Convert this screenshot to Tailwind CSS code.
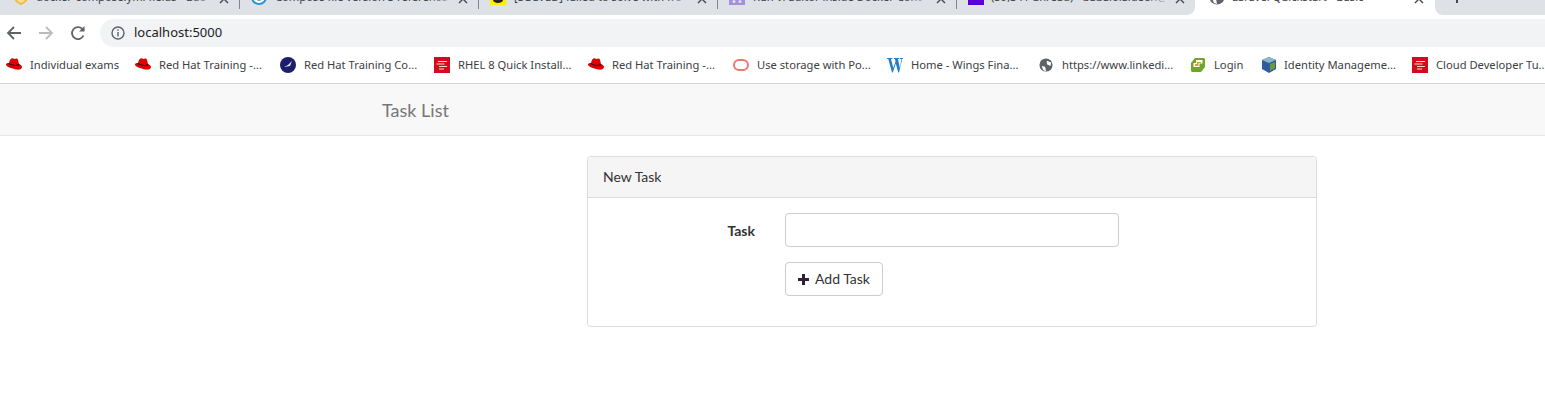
<!DOCTYPE html>
<html lang="en">
<head>
  <meta charset="UTF-8">
  <title>Laravel Quickstart - Basic</title>
  <script src="https://cdn.jsdelivr.net/npm/@tailwindcss/browser@4"></script>
</head>
<body class="bg-white h-[415px] overflow-hidden font-['Lato',sans-serif] text-[14px] text-[#333]">

  <!-- tab strip, cut off at the top of the screenshot -->
  <div class="flex h-[15px] overflow-hidden bg-white font-['Noto_Sans',sans-serif] text-[11.2px] text-[#3c4043]">
    <div class="flex w-[1195px] h-[15px] bg-[#dee1e6] rounded-br-[8px] overflow-hidden">
      <div class="relative flex items-center shrink-0 w-[239px] h-[30px] -mt-[18px] pl-[13px]">
        <svg class="w-[16px] h-[16px] shrink-0" viewBox="0 0 16 16"><path d="M1 5 8 0l7 5v3c0 4-3 6-7 8-4-2-7-4-7-8z" fill="#f6b73c"/><path d="M4 7h8v3c0 2-2 3-4 4-2-1-4-2-4-4z" fill="#fde293"/></svg>
        <span class="ml-[7px] whitespace-nowrap">docker-compose.yml fields - Bae</span>
        <span class="absolute right-[22px] top-0 w-[28px] h-full bg-linear-to-r from-[#dee1e6]/0 to-[#dee1e6]"></span>
        <svg class="absolute right-[10px] top-[12px] w-[10px] h-[10px]" viewBox="0 0 10 10"><path d="M1 1l8 8M9 1 1 9" stroke="#45484d" stroke-width="1.4"/></svg>
      </div>
      <div class="relative flex items-center shrink-0 w-[239px] h-[30px] -mt-[18px] pl-[12px]">
        <span class="absolute left-0 top-[18px] h-[9px] w-px bg-[#80868b]"></span>
        <svg class="w-[16px] h-[16px] shrink-0" viewBox="0 0 16 16"><circle cx="8" cy="8" r="7" fill="#fff" stroke="#2496d8" stroke-width="2"/><circle cx="8" cy="8" r="3.5" fill="#1c3f6e"/></svg>
        <span class="ml-[8px] whitespace-nowrap">Compose file version 3 reference</span>
        <span class="absolute right-[22px] top-0 w-[28px] h-full bg-linear-to-r from-[#dee1e6]/0 to-[#dee1e6]"></span>
        <svg class="absolute right-[10px] top-[12px] w-[10px] h-[10px]" viewBox="0 0 10 10"><path d="M1 1l8 8M9 1 1 9" stroke="#45484d" stroke-width="1.4"/></svg>
      </div>
      <div class="relative flex items-center shrink-0 w-[239px] h-[30px] -mt-[18px] pl-[12px]">
        <span class="absolute left-0 top-[18px] h-[9px] w-px bg-[#80868b]"></span>
        <svg class="w-[16px] h-[16px] shrink-0" viewBox="0 0 16 16"><rect width="16" height="16" fill="#ffee00"/><ellipse cx="8" cy="11" rx="5" ry="3" fill="#222"/></svg>
        <span class="ml-[8px] whitespace-nowrap">[SOLVED] failed to solve with fro</span>
        <span class="absolute right-[22px] top-0 w-[28px] h-full bg-linear-to-r from-[#dee1e6]/0 to-[#dee1e6]"></span>
        <svg class="absolute right-[10px] top-[12px] w-[10px] h-[10px]" viewBox="0 0 10 10"><path d="M1 1l8 8M9 1 1 9" stroke="#45484d" stroke-width="1.4"/></svg>
      </div>
      <div class="relative flex items-center shrink-0 w-[239px] h-[30px] -mt-[18px] pl-[12px]">
        <span class="absolute left-0 top-[18px] h-[9px] w-px bg-[#80868b]"></span>
        <svg class="w-[16px] h-[16px] shrink-0" viewBox="0 0 16 16"><rect width="16" height="16" fill="#a48fdc"/><circle cx="5" cy="12.500" r="1.500" fill="#e4dcf6"/><circle cx="11" cy="12.500" r="1.500" fill="#e4dcf6"/></svg>
        <span class="ml-[8px] whitespace-nowrap">Run vi Editor inside Docker Cont</span>
        <span class="absolute right-[22px] top-0 w-[28px] h-full bg-linear-to-r from-[#dee1e6]/0 to-[#dee1e6]"></span>
        <svg class="absolute right-[10px] top-[12px] w-[10px] h-[10px]" viewBox="0 0 10 10"><path d="M1 1l8 8M9 1 1 9" stroke="#45484d" stroke-width="1.4"/></svg>
      </div>
      <div class="relative flex items-center shrink-0 w-[239px] h-[30px] -mt-[18px] pl-[12px]">
        <span class="absolute left-0 top-[18px] h-[9px] w-px bg-[#80868b]"></span>
        <svg class="w-[16px] h-[16px] shrink-0" viewBox="0 0 16 16"><rect width="16" height="16" fill="#5a00d0"/></svg>
        <span class="ml-[7px] whitespace-nowrap">(59,341 unread) - babaiolaideen@</span>
        <span class="absolute right-[22px] top-0 w-[28px] h-full bg-linear-to-r from-[#dee1e6]/0 to-[#dee1e6]"></span>
        <svg class="absolute right-[10px] top-[12px] w-[10px] h-[10px]" viewBox="0 0 10 10"><path d="M1 1l8 8M9 1 1 9" stroke="#45484d" stroke-width="1.4"/></svg>
      </div>
    </div>
    <div class="relative flex items-center shrink-0 w-[240px] h-[30px] -mt-[18px] pl-[14px]">
      <svg class="w-[16px] h-[16px] shrink-0" viewBox="0 0 16 16"><circle cx="8" cy="8" r="7.5" fill="#5f6368"/><path d="M3 9l4 1 1 5-3-1zM9 3l5 2-1 4-4-2z" fill="#fff"/></svg>
      <span class="ml-[7px] whitespace-nowrap">Laravel Quickstart - Basic</span>
      <svg class="absolute right-[11px] top-[12px] w-[10px] h-[10px]" viewBox="0 0 10 10"><path d="M1 1l8 8M9 1 1 9" stroke="#45484d" stroke-width="1.4"/></svg>
    </div>
    <div class="flex-1 h-[15px] bg-[#dee1e6] rounded-bl-[8px] pl-[21px]">
      <span class="block w-[2px] h-[3px] bg-[#45484d]"></span>
    </div>
  </div>

  <!-- toolbar -->
  <div class="flex items-start h-[32px] pt-[4px] bg-white">
    <div class="flex items-center h-[28px] w-[100px] pl-[6px] gap-[16px]">
      <svg class="w-[16px] h-[16px]" viewBox="0 0 16 16" fill="none" stroke="#5f6368" stroke-width="1.8"><path d="M15 8H2M8 2 2 8l6 6"/></svg>
      <svg class="w-[16px] h-[16px]" viewBox="0 0 16 16" fill="none" stroke="#babcbe" stroke-width="1.8"><path d="M1 8h13M8 2l6 6-6 6"/></svg>
      <svg class="w-[16px] h-[16px]" viewBox="0 0 16 16" fill="none" stroke="#5f6368" stroke-width="1.8"><path d="M13.5 10.5A6 6 0 1 1 12.2 3.8L14 5.5"/><path d="M14.5 1v5.5H9" fill="#5f6368" stroke="none"/></svg>
    </div>
    <div class="flex-1 flex items-center h-[28px] pl-[11px] bg-[#f1f3f4] rounded-l-[14px] font-['Noto_Sans',sans-serif] text-[13px] text-[#202124]">
      <svg class="w-[14px] h-[14px] shrink-0" viewBox="0 0 14 14" fill="none" stroke="#5f6368" stroke-width="1.4"><circle cx="7" cy="7" r="6"/><path d="M7 6v4.5M7 3.2v1.6"/></svg>
      <span class="ml-[9px]">localhost:5000</span>
    </div>
  </div>

  <!-- bookmarks bar -->
  <div class="flex items-center h-[36px] pl-[6px] bg-white border-b border-[#d4d4d4] font-['Noto_Sans',sans-serif] text-[11.2px] text-[#3c4043] whitespace-nowrap box-content">
    <div class="flex items-center gap-[8px] w-[129px] shrink-0">
      <svg class="w-[16px] h-[16px]" viewBox="0 0 16 16"><path d="M5.500 1.500c1-.5 2 .5 3 .5s2-1 3 0c.7.8 1 3 1.500 5 1.500.7 3 1.700 3 3 0 2-2.500 3-5.500 2.500C7 12 0 10 0 7.500c0-1 1-1.500 3-1.500.5-2 1-4 2.500-4.500z" fill="#e00000"/><path d="M3 6c2.500 1.800 6.500 2.800 10 1l.4 1.200c-3.500 1.500-8 .3-10.900-1.200z" fill="#111"/></svg>
      <span>Individual exams</span>
    </div>
    <div class="flex items-center gap-[8px] w-[145px] shrink-0">
      <svg class="w-[16px] h-[16px]" viewBox="0 0 16 16"><path d="M5.500 1.500c1-.5 2 .5 3 .5s2-1 3 0c.7.8 1 3 1.500 5 1.500.7 3 1.700 3 3 0 2-2.500 3-5.500 2.500C7 12 0 10 0 7.500c0-1 1-1.500 3-1.500.5-2 1-4 2.500-4.500z" fill="#e00000"/><path d="M3 6c2.500 1.800 6.500 2.800 10 1l.4 1.200c-3.500 1.500-8 .3-10.900-1.200z" fill="#111"/></svg>
      <span>Red Hat Training -...</span>
    </div>
    <div class="flex items-center gap-[8px] w-[154px] shrink-0">
      <svg class="w-[16px] h-[16px]" viewBox="0 0 16 16"><circle cx="8" cy="8" r="8" fill="#1b1f6b"/><path d="M4 10l4-2 4-4-2 5z" fill="#dfe3f5"/><path d="M11 4l1 1-1 1z" fill="#e0483a"/></svg>
      <span>Red Hat Training Co...</span>
    </div>
    <div class="flex items-center gap-[8px] w-[154px] shrink-0">
      <svg class="w-[16px] h-[16px]" viewBox="0 0 16 16"><rect width="16" height="16" fill="#d40b1c"/><path d="M4 4.500h9M2.500 7h8M5 9.500h8M5 12h5" stroke="#fbd6d6" stroke-width="1.200"/></svg>
      <span>RHEL 8 Quick Install...</span>
    </div>
    <div class="flex items-center gap-[8px] w-[145px] shrink-0">
      <svg class="w-[16px] h-[16px]" viewBox="0 0 16 16"><path d="M5.500 1.500c1-.5 2 .5 3 .5s2-1 3 0c.7.8 1 3 1.500 5 1.500.7 3 1.700 3 3 0 2-2.500 3-5.500 2.500C7 12 0 10 0 7.500c0-1 1-1.500 3-1.500.5-2 1-4 2.500-4.500z" fill="#e00000"/><path d="M3 6c2.500 1.800 6.500 2.800 10 1l.4 1.200c-3.500 1.500-8 .3-10.900-1.200z" fill="#111"/></svg>
      <span>Red Hat Training -...</span>
    </div>
    <div class="flex items-center gap-[8px] w-[154px] shrink-0">
      <svg class="w-[16px] h-[16px]" viewBox="0 0 16 16"><rect x="1" y="3" width="14" height="10" rx="5" fill="none" stroke="#ea7a6a" stroke-width="2"/></svg>
      <span>Use storage with Po...</span>
    </div>
    <div class="flex items-center gap-[8px] w-[152px] shrink-0">
      <svg class="w-[16px] h-[16px]" viewBox="0 0 16 16"><path d="M0 1h5.500v.8l-1.500.3L6.300 11 8.500 4.500 8 2.100 7 1.800V1h5.500v.8l-1.500.3L12.800 11 14.500 2.100 13 1.800V1h3v.8l-.8.3L12 15.500h-.8L8.800 6.500 5.800 15.500H5L1.300 2.100 0 1.800z" fill="#1a7fd0"/></svg>
      <span>Home - Wings Fina...</span>
    </div>
    <div class="flex items-center gap-[9px] w-[151px] shrink-0">
      <svg class="w-[14px] h-[14px]" viewBox="0 0 16 16"><circle cx="8" cy="8" r="7.500" fill="#5f6368"/><path d="M3 9l4 1 1 5-3-1zM9 3l5 2-1 4-4-2z" fill="#fff"/></svg>
      <span>https://www.linkedi...</span>
    </div>
    <div class="flex items-center gap-[8px] w-[71px] shrink-0">
      <svg class="w-[16px] h-[16px]" viewBox="0 0 16 16"><path d="M5 1h9l1 1v8l-4 5H2l-1-1V6z" fill="#6fa52b"/><path d="M6 3h6.500v3.500H9.500V10H3.500V6H6z" fill="#fff"/><path d="M7 5h4v1H8.500v3H5V7h2z" fill="#f29a11"/></svg>
      <span>Login</span>
    </div>
    <div class="flex items-center gap-[7px] w-[151px] shrink-0">
      <svg class="w-[16px] h-[16px]" viewBox="0 0 16 16"><path d="M8 0l7 3v9l-7 4-7-4V3z" fill="#2a5e9e"/><path d="M8 0l7 3-7 3-7-3z" fill="#8fb5c9"/><path d="M9 7l5-2v6l-5 3z" fill="#6f9a3a"/></svg>
      <span>Identity Manageme...</span>
    </div>
    <div class="flex items-center gap-[8px] shrink-0">
      <svg class="w-[16px] h-[16px]" viewBox="0 0 16 16"><rect width="16" height="16" fill="#d40b1c"/><path d="M4 4.500h9M2.500 7h8M5 9.500h8M5 12h5" stroke="#fbd6d6" stroke-width="1.200"/></svg>
      <span>Cloud Developer Tu...</span>
    </div>
  </div>

  <!-- page -->
  <nav class="flex items-center h-[52px] pl-[382px] pt-[2px] bg-[#f8f8f8] border-b border-[#e7e7e7] box-border text-[18px] text-[#777]">Task List</nav>

  <main class="pt-[20px] pl-[587px]">
    <section class="w-[730px] h-[171px] bg-white border border-[#dcdcdc] rounded-[4px] overflow-hidden">
      <div class="flex items-center h-[38px] px-[15px] pb-[2px] bg-[#f5f5f5] border-b border-[#dcdcdc] box-content">New Task</div>
      <form class="pt-[15px]">
        <div class="flex items-center">
          <label class="w-[167px] text-right font-bold">Task</label>
          <input type="text" class="ml-[30px] w-[334px] h-[34px] px-[12px] bg-white border border-[#ccc] rounded-[4px]">
        </div>
        <button type="button" class="flex items-center ml-[197px] mt-[15px] w-[98px] h-[34px] pl-[12px] pb-[2px] bg-white border border-[#ccc] rounded-[4px] text-[#333]">
          <svg class="w-[11px] h-[11px] mt-[2px]" viewBox="0 0 11 11"><path d="M4 0h3v4h4v3H7v4H4V7H0V4h4z" fill="#2d2238"/></svg>
          <span class="ml-[6px]">Add Task</span>
        </button>
      </form>
    </section>
  </main>
</body>
</html>
